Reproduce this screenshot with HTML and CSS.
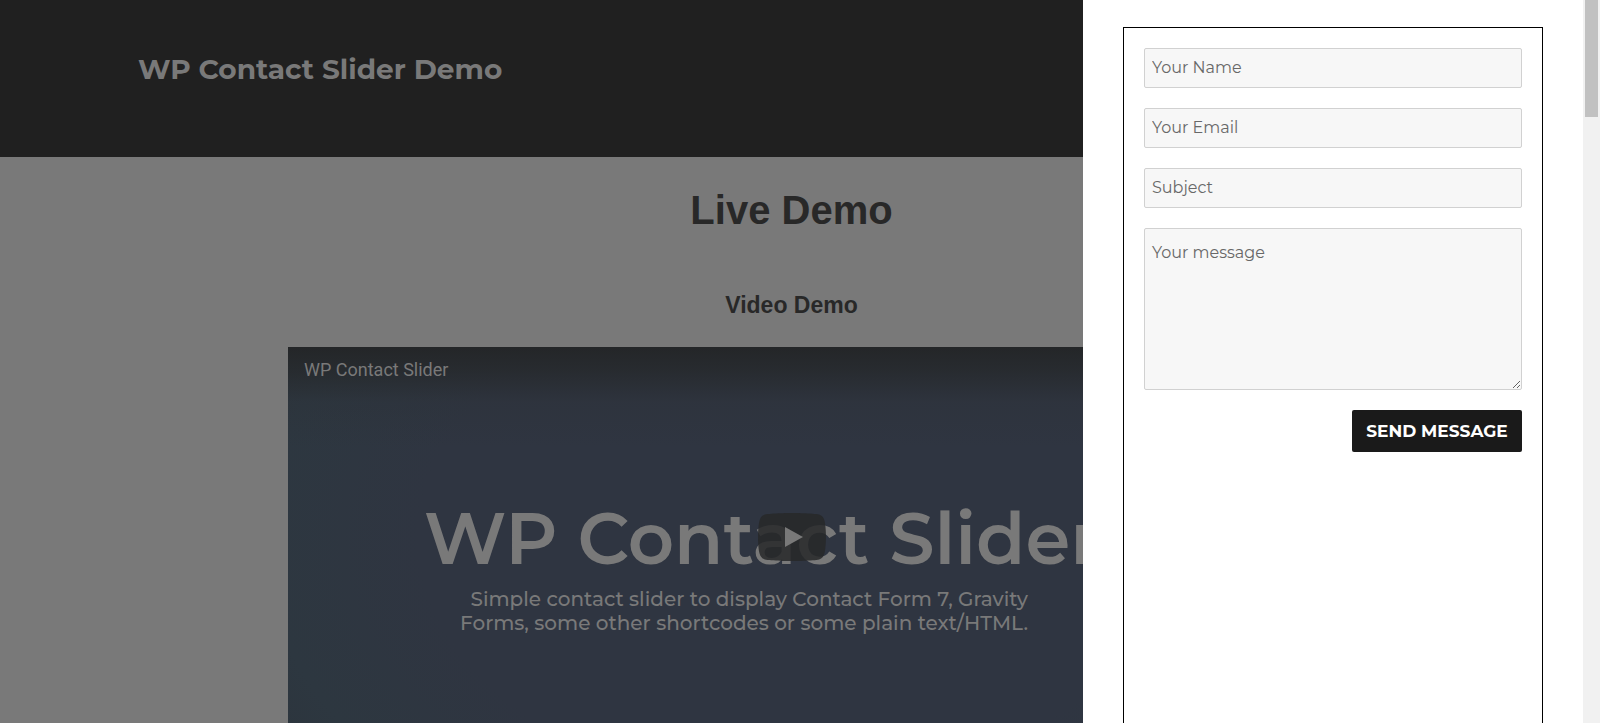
FILE: index.html
```html
<!DOCTYPE html>
<html lang="en">
<head>
<meta charset="utf-8">
<meta name="viewport" content="width=device-width, initial-scale=1">
<title>WP Contact Slider Demo</title>
<link rel="stylesheet" href="styles.css">
</head>
<body>
<div class="window">
  <div class="page">
    <header class="site-header">
      <a class="site-title" href="#">WP Contact Slider Demo</a>
    </header>
    <main class="content">
      <h1 class="heading">Live Demo</h1>
      <h2 class="subheading">Video Demo</h2>
      <section class="video">
        <a class="video-link" href="#">WP Contact Slider</a>
        <div class="poster">
          <p class="poster-title">WP Contact Slider</p>
          <p class="poster-text">Simple contact slider to display Contact Form 7, Gravity<br>Forms, some other shortcodes or some plain text/HTML.</p>
        </div>
        <button class="play" type="button" aria-label="Play">
          <svg viewBox="0 0 68 48" width="68" height="48" aria-hidden="true">
            <path class="play-bg" d="M66.52,7.74c-0.78-2.93-2.49-5.41-5.42-6.19C55.79,.13,34,0,34,0S12.21,.13,6.9,1.55C3.97,2.33,2.27,4.81,1.48,7.74C0.06,13.05,0,24,0,24s0.06,10.95,1.48,16.26c0.78,2.93,2.49,5.41,5.42,6.19C12.21,47.87,34,48,34,48s21.79-0.13,27.1-1.55c2.93-0.78,4.64-3.26,5.42-6.19C67.94,34.95,68,24,68,24S67.94,13.05,66.52,7.74z"/>
            <path class="play-arrow" d="M45,24 27,14 27,34z"/>
          </svg>
        </button>
      </section>
    </main>
    <aside class="slider">
      <form class="contact-form">
        <input class="field" type="text" placeholder="Your Name" aria-label="Your Name">
        <input class="field" type="email" placeholder="Your Email" aria-label="Your Email">
        <input class="field" type="text" placeholder="Subject" aria-label="Subject">
        <textarea class="field message" placeholder="Your message" aria-label="Your message"></textarea>
        <button class="send" type="submit">SEND MESSAGE</button>
      </form>
    </aside>
  </div>
  <div class="scrollbar"><div class="thumb"></div></div>
</div>
</body>
</html>
```
FILE: styles.css
```css
* {
  box-sizing: border-box;
}

body {
  margin: 0;
  font-family: Montserrat, Inter, sans-serif;
}

.window {
  display: flex;
  height: 100vh;
  overflow: hidden;
}

.page {
  position: relative;
  flex: 1;
  overflow: hidden;
  background: #797979;
}

.site-header {
  padding: 52px 138px 71px;
  background: #202020;
}

.site-title {
  display: block;
  color: #797979;
  font-size: 28px;
  font-weight: 700;
  line-height: 34px;
  text-decoration: none;
}

.content {
  padding: 28px 288px 0;
  color: #282828;
  text-align: center;
}

.heading,
.subheading {
  margin: 0;
  font-family: "Liberation Sans", Arial, sans-serif;
  font-weight: 700;
}

.heading {
  font-size: 40px;
  line-height: 50px;
}

.subheading {
  margin: 54px 0 26px;
  font-size: 23px;
  line-height: 32px;
}

.video {
  position: relative;
  height: 380px;
  padding: 12px 16px;
  background:
    linear-gradient(rgba(36, 38, 40, 1), rgba(38, 41, 44, 0.8) 25px, rgba(44, 49, 56, 0.4) 55px, transparent 100px),
    radial-gradient(ellipse 620px 420px at 50% 50%, #2f3541 60%, #2d3740 85%, #2c343c);
  color: #797979;
  text-align: left;
}

.video-link {
  color: #797979;
  font: 18px/22px Roboto, sans-serif;
  text-decoration: none;
}

.poster {
  padding: 117px 0 0 120px;
}

.poster-title,
.poster-text {
  margin: 0;
  font-weight: 500;
  white-space: nowrap;
}

.poster-title {
  font-size: 72px;
  font-weight: 600;
  line-height: 80px;
}

.poster-text {
  width: 604px;
  margin-top: 9px;
  font-size: 20px;
  line-height: 24px;
  text-align: right;
}

.play {
  position: absolute;
  top: 50%;
  left: 50%;
  margin: -24px 0 0 -34px;
  padding: 0;
  border: 0;
  background: none;
}

.play svg {
  display: block;
}

.play-bg {
  fill: #272829;
  fill-opacity: 0.85;
}

.play-arrow {
  fill: #797979;
}

.slider {
  position: absolute;
  top: 0;
  right: 0;
  bottom: 0;
  width: 500px;
  padding: 27px 40px 0;
  overflow: hidden;
  background: #fff;
}

.contact-form {
  display: flex;
  flex-direction: column;
  gap: 20px;
  min-height: 100vh;
  padding: 20px;
  border: 1px solid #000;
}

.field {
  width: 100%;
  height: 40px;
  padding: 0 7px 2px;
  border: 1px solid #d1d1d1;
  border-radius: 2px;
  background: #f7f7f7;
  font: 400 16px/24px Montserrat, Inter, sans-serif;
}

.field::placeholder {
  color: #686868;
  opacity: 1;
}

.message {
  height: 162px;
  padding: 12px 7px;
  resize: vertical;
}

.send {
  align-self: flex-end;
  width: 170px;
  height: 42px;
  padding: 0;
  border: 0;
  border-radius: 2px;
  background: #1a1a1a;
  color: #fff;
  font: 700 17px/20px Montserrat, Inter, sans-serif;
}

.scrollbar {
  width: 17px;
  padding: 0 2px;
  background: #f1f1f1;
}

.thumb {
  height: 117px;
  background: #c1c1c1;
}
```
